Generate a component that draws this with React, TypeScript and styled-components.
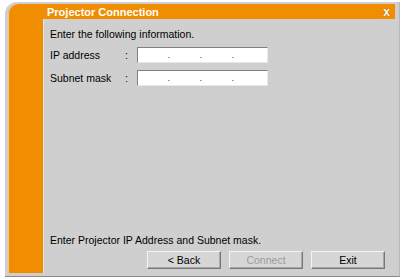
import React from "react";
import styled, { createGlobalStyle } from "styled-components";

const Global = createGlobalStyle`
  html, body { margin: 0; padding: 0; background: #ffffff; }
  body { font-family: "Liberation Sans", Arial, sans-serif; }
`;

const Window = styled.div`
  margin: 2px 0 0 5px;
  width: 395px;
  height: 275px;
  box-sizing: border-box;
  background: #cfcfcf;
  border-top-left-radius: 12px;
  border-bottom: 1px solid #8a8a8a;
  border-right: 1px solid #b8b8b8;
  padding: 2px 4px 3px 3px;
  display: flex;
`;

const Sidebar = styled.div`
  width: 35px;
  background: #f18d00;
  border-top-left-radius: 10px;
  box-shadow: 1px 0 0 #e8c9a0 inset;
`;

const Main = styled.div`
  flex: 1;
  display: flex;
  flex-direction: column;
`;

const TitleBar = styled.div`
  height: 15px;
  background: #f18d00;
  display: flex;
  align-items: center;
  justify-content: space-between;
  padding: 0 5px 0 4px;
  color: #ffffff;
  font-weight: bold;
  font-size: 11px;
`;

const Close = styled.span`
  font-size: 12px;
  font-weight: bold;
  color: #ffffff;
  line-height: 1;
  text-shadow: 0 0 1px #7a4a00;
`;

const Content = styled.div`
  flex: 1;
  display: flex;
  flex-direction: column;
  padding: 8px 0 0 6px;
  font-size: 10.5px;
  color: #000;
  border-left: 1px solid #e4e4e4;
`;

const Line = styled.div`
  height: 14px;
  line-height: 14px;
`;

const Field = styled.div<{ $top: number }>`
  display: grid;
  grid-template-columns: 75px 12px 131px;
  align-items: center;
  height: 16px;
  margin-top: ${(p) => p.$top}px;
`;

const Colon = styled.span`
  color: #000;
`;

const IPBox = styled.div`
  height: 16px;
  box-sizing: border-box;
  background: #fff;
  border-top: 1px solid #808080;
  border-left: 1px solid #808080;
  border-right: 1px solid #e8e8e8;
  border-bottom: 1px solid #e8e8e8;
  display: grid;
  grid-template-columns: repeat(4, 32px);
  font-size: 9px;
  line-height: 14px;
`;

const Seg = styled.span`
  text-align: right;
  color: #333;
`;

const Spacer = styled.div`
  flex: 1;
`;

const Footer = styled.div`
  display: flex;
  flex-direction: column;
  padding-bottom: 4px;
`;

const Buttons = styled.div`
  display: flex;
  justify-content: flex-end;
  gap: 8px;
  padding-right: 10px;
  margin-top: 4px;
`;

const Button = styled.button<{ $disabled?: boolean }>`
  width: 74px;
  height: 18px;
  padding: 0;
  font-family: inherit;
  font-size: 10.5px;
  background: #d6d6d6;
  color: ${(p) => (p.$disabled ? "#9c9c9c" : "#000")};
  border-top: 1px solid #f4f4f4;
  border-left: 1px solid #f4f4f4;
  border-right: 1px solid #777;
  border-bottom: 1px solid #777;
  box-shadow: inset -1px -1px 0 #a8a8a8;
`;

const IPField = () => (
  <IPBox>
    <Seg>.</Seg>
    <Seg>.</Seg>
    <Seg>.</Seg>
    <Seg></Seg>
  </IPBox>
);

export default function App() {
  return (
    <>
      <Global />
      <Window>
        <Sidebar />
        <Main>
          <TitleBar>
            <span>Projector Connection</span>
            <Close>x</Close>
          </TitleBar>
          <Content>
            <Line>Enter the following information.</Line>
            <Field $top={6}>
              <span>IP address</span>
              <Colon>:</Colon>
              <IPField />
            </Field>
            <Field $top={7}>
              <span>Subnet mask</span>
              <Colon>:</Colon>
              <IPField />
            </Field>
            <Spacer />
            <Footer>
              <Line>Enter Projector IP Address and Subnet mask.</Line>
              <Buttons>
                <Button>&lt; Back</Button>
                <Button $disabled>Connect</Button>
                <Button>Exit</Button>
              </Buttons>
            </Footer>
          </Content>
        </Main>
      </Window>
    </>
  );
}
